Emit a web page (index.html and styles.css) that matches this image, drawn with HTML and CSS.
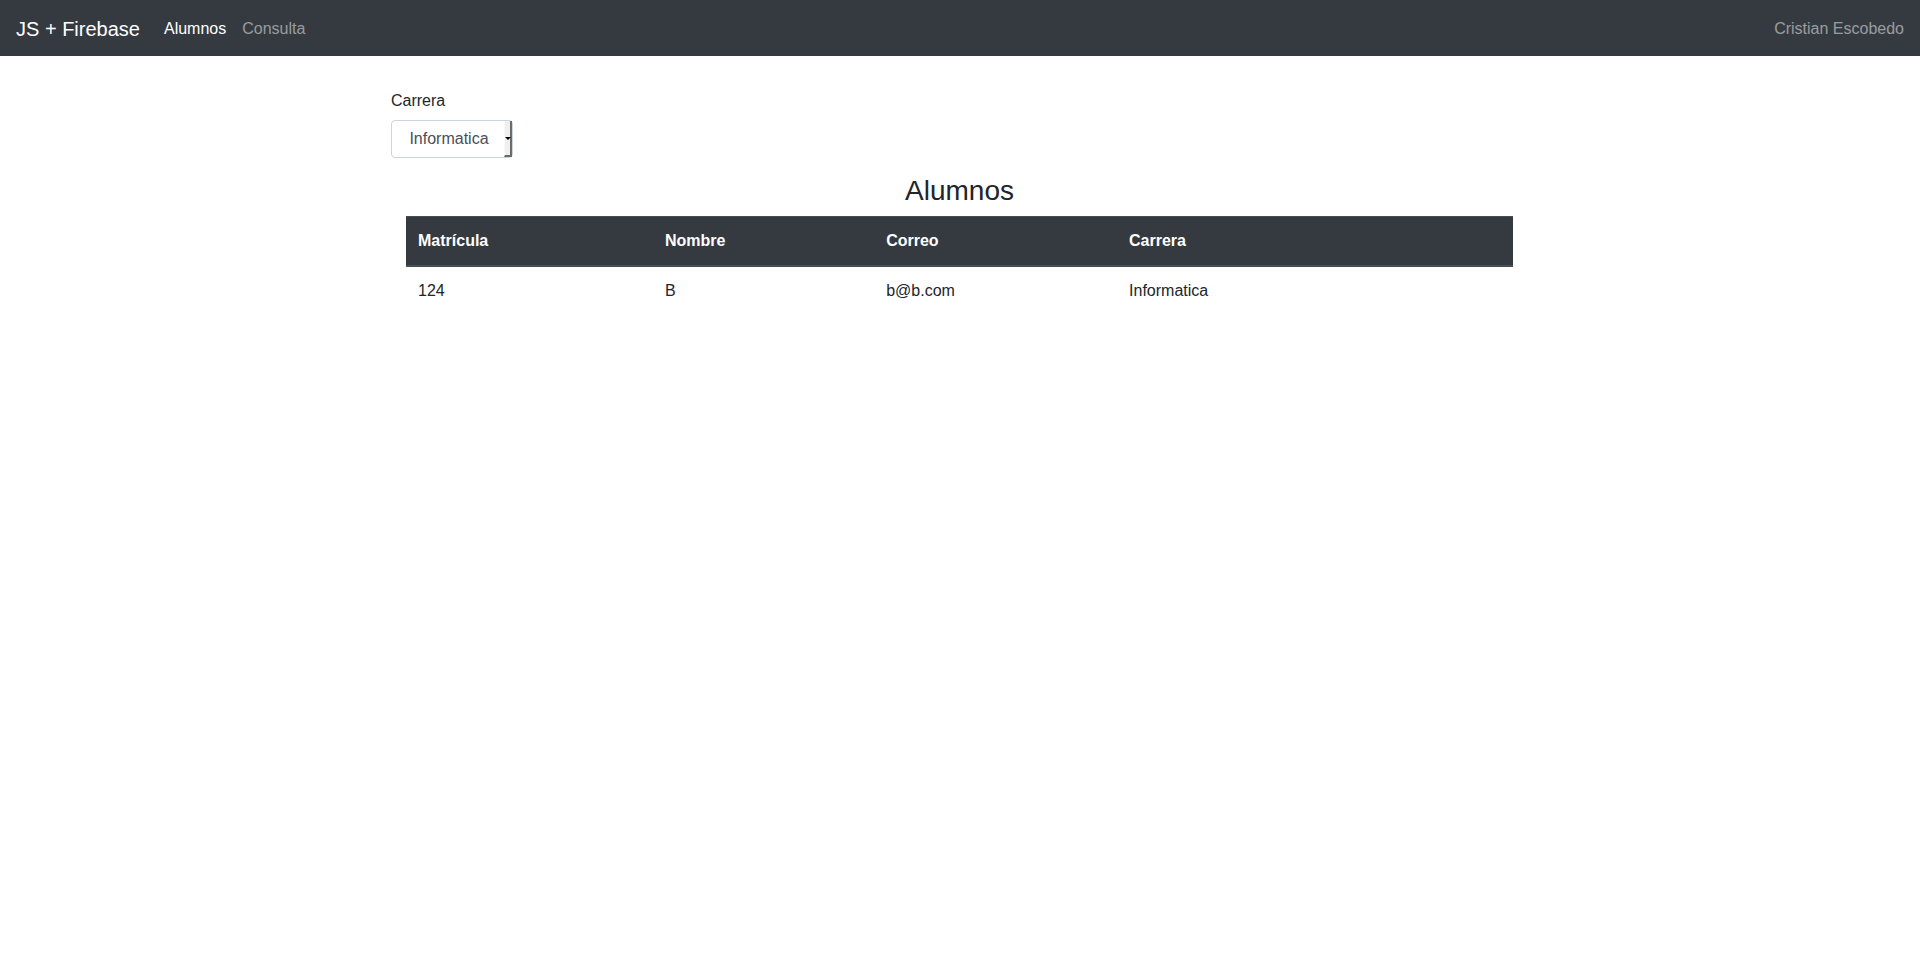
FILE: index.html
```html
<!DOCTYPE html>
<html lang="es">
<head>
<meta charset="utf-8">
<title>JS + Firebase</title>
<link rel="stylesheet" href="styles.css">
</head>
<body>
<nav class="navbar">
  <a class="brand" href="#">JS + Firebase</a>
  <ul class="nav">
    <li><a class="nav-link active" href="#">Alumnos</a></li>
    <li><a class="nav-link" href="#">Consulta</a></li>
  </ul>
  <span class="navbar-text">Cristian Escobedo</span>
</nav>
<main class="container">
  <div class="form-group">
    <label class="label">Carrera</label>
    <div class="select">
      <span class="select-value">Informatica</span>
      <span class="select-btn"><span class="caret"></span></span>
    </div>
  </div>
  <h3 class="title">Alumnos</h3>
  <table class="table">
    <thead>
      <tr><th>Matrícula</th><th>Nombre</th><th>Correo</th><th>Carrera</th><th></th><th></th></tr>
    </thead>
    <tbody>
      <tr><td>124</td><td>B</td><td>b@b.com</td><td>Informatica</td><td></td><td></td></tr>
    </tbody>
  </table>
</main>
</body>
</html>
```

FILE: styles.css
```css
* { box-sizing: border-box; }
body {
  margin: 0;
  font-family: "Liberation Sans", Arial, sans-serif;
  font-size: 16px;
  line-height: 1.5;
  color: #212529;
  background: #fff;
}
.navbar {
  height: 56px;
  background: #343a40;
  display: flex;
  align-items: center;
  padding: 2px 16px 0;
}
.brand {
  font-size: 20px;
  color: #fff;
  text-decoration: none;
  margin-right: 16px;
  line-height: 30px;
}
.nav {
  list-style: none;
  margin: 0;
  padding: 0;
  display: flex;
}
.nav-link {
  display: block;
  padding: 8px;
  color: rgba(255,255,255,.5);
  text-decoration: none;
}
.nav-link.active { color: #fff; }
.navbar-text {
  margin-left: auto;
  color: rgba(255,255,255,.5);
}
.container {
  width: 1140px;
  margin: 0 auto;
  padding: 32px 17px 0 16px;
}
.form-group {
  margin: 0 -15px 16px;
}
.label {
  display: block;
  margin: 1px 0 7px;
}
.select {
  width: 122px;
  height: 38px;
  border: 1px solid #ced4da;
  border-radius: 4px;
  display: flex;
  color: #495057;
  background: #fff;
}
.select-value {
  flex: 1;
  text-align: center;
  line-height: 36px;
  padding-left: 2px;
}
.select-btn {
  width: 8px;
  background: #efefef;
  border-left: 1px solid #fafafa;
  border-right: 2px solid #6b6b6b;
  border-bottom: 2px solid #6b6b6b;
  display: flex;
  align-items: center;
  justify-content: center;
}
.caret {
  width: 0;
  height: 0;
  border-left: 3px solid transparent;
  border-right: 3px solid transparent;
  border-top: 3px solid #000;
}
.title {
  margin: 1px 0 8px;
  font-size: 28px;
  font-weight: 400;
  line-height: 1.2;
  text-align: center;
}
.table {
  width: 100%;
  border-collapse: collapse;
}
.table th {
  background: #343a40;
  color: #fff;
  text-align: left;
  font-weight: 700;
  padding: 12px;
  border-top: 1px solid #454d55;
  border-bottom: 2px solid #454d55;
}
.table td {
  padding: 12px;
  border-top: 1px solid #dee2e6;
}
```
